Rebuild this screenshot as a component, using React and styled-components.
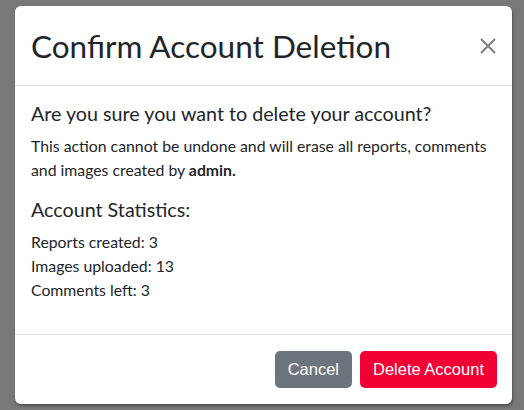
import React from "react";
import styled, { createGlobalStyle } from "styled-components";

const Global = createGlobalStyle`
  html, body { margin: 0; padding: 0; }
  body {
    background: #787878;
    font-family: Lato, "Noto Sans", sans-serif;
    color: #212529;
  }
`;

const Backdrop = styled.div`
  height: 410px;
  padding: 6px 12px 0 15px;
  box-sizing: border-box;
  overflow: hidden;
`;

const Modal = styled.div`
  width: 497px;
  background: #fff;
  border-radius: 6px;
  box-shadow: 1px 2px 3px rgba(0, 0, 0, 0.35);
`;

const Header = styled.div`
  display: flex;
  align-items: center;
  justify-content: space-between;
  padding: 16px 14px 15px 16px;
  border-bottom: 1px solid #dee2e6;
`;

const Title = styled.h1`
  margin: 0;
  font-size: 31.5px;
  font-weight: 400;
  line-height: 48px;
`;

const Close = styled.button`
  border: 0;
  background: none;
  padding: 0;
  width: 20px;
  height: 20px;
  display: flex;
  align-items: center;
  justify-content: center;
  cursor: pointer;
`;

const Body = styled.div`
  padding: 16px;
  border-bottom: 1px solid #dee2e6;
`;

const Heading = styled.h2`
  margin: 0 0 8px;
  font-size: 19.7px;
  font-weight: 400;
  line-height: 24px;
`;

const Text = styled.p`
  margin: 0 0 16px;
  font-size: 15.8px;
  line-height: 24px;
`;

const Footer = styled.div`
  display: flex;
  justify-content: flex-end;
  gap: 8px;
  padding: 16px 15px 16px 16px;
`;

const Button = styled.button`
  border: 0;
  border-radius: 5px;
  height: 37px;
  padding: 0 13px;
  font-family: "Liberation Sans", Arial, sans-serif;
  font-size: 16.5px;
  color: #fff;
  background: ${(p) => (p.$variant === "danger" ? "#f10034" : "#6c757d")};
  cursor: pointer;
`;

export default function App() {
  return (
    <>
      <Global />
      <Backdrop>
        <Modal>
          <Header>
            <Title>Confirm Account Deletion</Title>
            <Close aria-label="Close">
              <svg width="16" height="16" viewBox="0 0 16 16">
                <path d="M1 1L15 15M15 1L1 15" stroke="#7a7a7a" strokeWidth="1.8" />
              </svg>
            </Close>
          </Header>
          <Body>
            <Heading>Are you sure you want to delete your account?</Heading>
            <Text>
              This action cannot be undone and will erase all reports, comments and images created by <b>admin.</b>
            </Text>
            <Heading>Account Statistics:</Heading>
            <Text>
              Reports created: 3
              <br />
              Images uploaded: 13
              <br />
              Comments left: 3
            </Text>
          </Body>
          <Footer>
            <Button>Cancel</Button>
            <Button $variant="danger">Delete Account</Button>
          </Footer>
        </Modal>
      </Backdrop>
    </>
  );
}
